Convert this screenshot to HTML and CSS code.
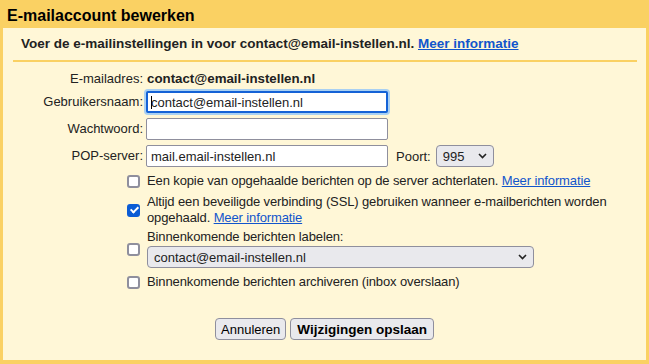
FILE: index.html
```html
<!DOCTYPE html>
<html lang="nl">
<head>
    <meta charset="UTF-8">
    <meta name="viewport" content="width=device-width, initial-scale=1.0">
    <title>E-mailaccount bewerken</title>
    <link rel="stylesheet" href="styles.css">
</head>
<body>
    <div class="dialog">
        <h1 class="dialog-title">E-mailaccount bewerken</h1>
        <div class="panel">
            <div class="intro">
                Voer de e-mailinstellingen in voor contact@email-instellen.nl. <a href="#">Meer informatie</a>
            </div>

            <form class="settings-form" onsubmit="return false">
                <div class="field-label">E-mailadres:</div>
                <div class="field-value">contact@email-instellen.nl</div>

                <label class="field-label" for="username">Gebruikersnaam:</label>
                <div class="field">
                    <span class="focus-wrap">
                        <input type="text" id="username" class="text-input is-focused" value="contact@email-instellen.nl">
                        <span class="caret"></span>
                    </span>
                </div>

                <label class="field-label" for="password">Wachtwoord:</label>
                <div class="field">
                    <input type="password" id="password" class="text-input">
                </div>

                <label class="field-label" for="popServer">POP-server:</label>
                <div class="field">
                    <input type="text" id="popServer" class="text-input" value="mail.email-instellen.nl">
                    <label class="port-label" for="port">Poort:</label>
                    <span class="select-wrap port-select">
                        <select id="port">
                            <option>995</option>
                            <option>110</option>
                        </select>
                        <svg class="chevron" width="9" height="6" viewBox="0 0 9 6"><path d="M1 1l3.5 3.5L8 1" fill="none" stroke="#222" stroke-width="1.6"/></svg>
                    </span>
                </div>

                <div class="check-cell first"><input type="checkbox" id="leaveCopy" class="check"></div>
                <div class="check-text first"><label for="leaveCopy">Een kopie van opgehaalde berichten op de server achterlaten.</label> <a href="#">Meer informatie</a></div>

                <div class="check-cell"><input type="checkbox" id="useSsl" class="check" checked></div>
                <div class="check-text"><label for="useSsl">Altijd een beveiligde verbinding (SSL) gebruiken wanneer e-mailberichten worden opgehaald.</label> <a href="#">Meer informatie</a></div>

                <div class="check-cell"><input type="checkbox" id="labelIncoming" class="check"></div>
                <div class="check-text stacked">
                    <label for="labelIncoming">Binnenkomende berichten labelen:</label>
                    <span class="select-wrap label-select">
                        <select>
                            <option>contact@email-instellen.nl</option>
                        </select>
                        <svg class="chevron" width="9" height="6" viewBox="0 0 9 6"><path d="M1 1l3.5 3.5L8 1" fill="none" stroke="#222" stroke-width="1.6"/></svg>
                    </span>
                </div>

                <div class="check-cell last"><input type="checkbox" id="archive" class="check"></div>
                <div class="check-text last"><label for="archive">Binnenkomende berichten archiveren (inbox overslaan)</label></div>

                <div class="actions">
                    <button type="button" class="btn">Annuleren</button>
                    <button type="submit" class="btn btn-primary">Wijzigingen opslaan</button>
                </div>
            </form>
        </div>
    </div>
</body>
</html>
```

FILE: styles.css
```css
:root {
    --gold: #fad163;
    --panel: #fff7d7;
    --text: #222;
    --link: #1155cc;
    --field-border: #8f8f9d;
    --button-bg: #e9e9ed;
}

* {
    margin: 0;
    padding: 0;
    box-sizing: border-box;
}

body {
    font-family: "Liberation Sans", Arial, sans-serif;
    font-size: 13px;
    color: var(--text);
    background: var(--gold);
}

.dialog {
    width: 649px;
    height: 364px;
}

.dialog-title {
    font-size: 16px;
    font-weight: bold;
    line-height: 20px;
    height: 28px;
    padding: 6px 7px 2px;
    color: #000;
}

.panel {
    margin: 0 3px;
    background: var(--panel);
    padding-bottom: 20px;
}

.intro {
    margin: 0 9px 0 10px;
    padding: 8px 8px;
    line-height: 16px;
    font-size: 13.5px;
    font-weight: bold;
    border-bottom: 2px solid var(--gold);
}

a {
    color: var(--link);
    text-decoration: underline;
}

.settings-form {
    display: grid;
    grid-template-columns: 140px 1fr;
    column-gap: 3px;
    row-gap: 5px;
    padding-top: 10px;
}

.field-label {
    text-align: right;
    align-self: center;
    line-height: 14px;
}

.field-value {
    font-weight: bold;
    font-size: 13.3px;
    line-height: 14px;
    padding-left: 1px;
}

.field {
    display: flex;
    align-items: center;
}

.text-input {
    width: 242px;
    height: 22px;
    border: 1px solid var(--field-border);
    border-radius: 2px;
    padding: 0 4px;
    font-family: inherit;
    font-size: 13px;
    color: var(--text);
    background: #fff;
    outline: none;
}

.focus-wrap {
    position: relative;
    display: block;
}

.text-input.is-focused {
    border: 2px solid #1462d6;
    padding: 0 3px;
    box-shadow: 0 0 0 2px #a9d0f2;
}

.caret {
    position: absolute;
    left: 5px;
    top: 5px;
    width: 1px;
    height: 13px;
    background: #000;
}

.port-label {
    margin: 0 5px 0 8px;
}

.select-wrap {
    position: relative;
    display: block;
    width: max-content;
}

.select-wrap select {
    appearance: none;
    -webkit-appearance: none;
    height: 22px;
    border: 1px solid var(--field-border);
    border-radius: 4px;
    background: var(--button-bg);
    font-family: inherit;
    font-size: 13px;
    color: var(--text);
    padding: 0 20px 0 6px;
    display: block;
}

.select-wrap .chevron {
    position: absolute;
    right: 7px;
    top: 8px;
    pointer-events: none;
}

.port-select select {
    width: 58px;
}

.label-select select {
    width: 387px;
}

.check-cell {
    display: flex;
    justify-content: flex-end;
    align-items: center;
    padding-right: 3px;
}

.check-cell.first,
.check-text.first,
.check-cell.last,
.check-text.last {
    margin-top: 1px;
}

.check {
    appearance: none;
    -webkit-appearance: none;
    width: 13px;
    height: 13px;
    border: 2px solid var(--field-border);
    border-radius: 3px;
    background: #fff;
    position: relative;
}

.check:checked {
    background: #0b5cd5;
    border-color: #0b5cd5;
}

.check:checked::after {
    content: "";
    position: absolute;
    left: 2.5px;
    top: -0.5px;
    width: 3px;
    height: 6px;
    border-right: 2px solid #fff;
    border-bottom: 2px solid #fff;
    transform: rotate(45deg);
}

.check-text {
    line-height: 16px;
    max-width: 470px;
    padding-left: 1px;
    letter-spacing: -0.12px;
}

.check-text.stacked {
    display: flex;
    flex-direction: column;
    gap: 1px;
    margin-top: -2px;
}

.actions {
    grid-column: 1 / -1;
    display: flex;
    justify-content: center;
    gap: 4px;
    margin-top: 23px;
}

.btn {
    height: 22px;
    padding: 0 5px;
    border: 1px solid var(--field-border);
    border-radius: 4px;
    background: var(--button-bg);
    font-family: inherit;
    font-size: 13px;
    color: #000;
    cursor: pointer;
}

.btn-primary {
    font-weight: bold;
    font-size: 13.5px;
    padding: 0 6px;
}
```
